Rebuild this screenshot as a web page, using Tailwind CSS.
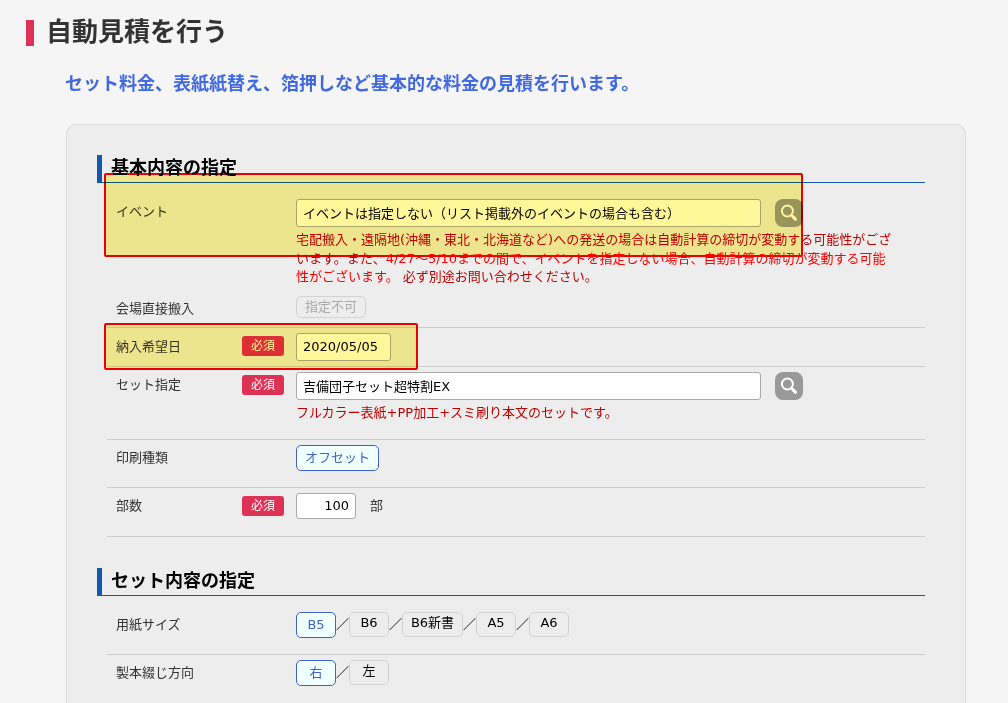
<!DOCTYPE html>
<html lang="ja">
<head>
<meta charset="utf-8">
<meta name="viewport" content="width=device-width, initial-scale=1">
<title>自動見積を行う</title>
<script src="https://cdn.jsdelivr.net/npm/@tailwindcss/browser@4"></script>
</head>
<body class="bg-[#f5f5f5] font-['DejaVu_Sans','Noto_Sans_CJK_JP',sans-serif] text-[13px] leading-[26px] text-[#333]">
<main class="pt-5 pr-[42px] pl-[26px]">
  <h1 class="flex h-[26px] items-center border-l-8 border-[#de3156] pb-0.5 pl-3 text-[26px] font-bold">自動見積を行う</h1>
  <p class="mt-[25px] pl-[39px] text-[18px] font-bold text-[#4169e1]">セット料金、表紙紙替え、箔押しなど基本的な料金の見積を行います。</p>

  <form class="relative mt-[27px] ml-10 rounded-[10px] border border-[#dcdcdc] bg-[#ededed] pt-[30px] pr-10 pb-10 pl-[30px]">
    <section>
      <h2 class="flex h-7 items-center border-b border-l-5 border-[#0f5ab0] pb-0.5 pl-[9px] text-[18px] font-bold text-black">基本内容の指定</h2>

      <div class="ml-[10px] grid grid-cols-[125px_54px_1fr] pt-4 pb-[5px] pl-[9px]">
        <label for="event">イベント</label>
        <span></span>
        <div class="pl-px">
          <div class="flex gap-[14px]">
            <input id="event" type="text" readonly value="イベントは指定しない（リスト掲載外のイベントの場合も含む）" class="h-7 w-[465px] rounded-[3px] border border-[#aaa] bg-white px-1.5 pb-0.5 text-black">
            <button type="button" aria-label="イベントを検索" class="flex size-7 items-center justify-center rounded-[8px] bg-[#999]">
              <svg viewBox="0 0 28 28" class="size-7" fill="none" stroke="#fff" stroke-linecap="round"><circle cx="12.4" cy="12" r="5.5" stroke-width="2"/><path d="M16.4 16l1.8 1.8" stroke-width="2"/><path d="M18 17.8l2.4 2.4" stroke-width="3.2"/></svg>
            </button>
          </div>
          <p class="mt-1 max-w-[602px] leading-[18px] text-[#c00000]">宅配搬入・遠隔地(沖縄・東北・北海道など)への発送の場合は自動計算の締切が変動する可能性がござ<br>います。また、<span class="text-[#ff0000]">4/27<span class="font-['Noto_Sans_CJK_JP']">～</span>5/10までの間で、イベントを指定しない場合、自動計算の締切が変動する可能<br>性がございます。</span> 必ず別途お問い合わせください。</p>
        </div>
      </div>

      <div class="ml-[10px] grid grid-cols-[125px_54px_1fr] border-b border-[#ccc] py-[5px] pl-[9px]">
        <span>会場直接搬入</span>
        <span></span>
        <div class="flex items-start pl-px">
          <button type="button" disabled class="h-[22px] w-[70px] rounded-[5px] border border-[#d3d3d3] text-[#aaa] leading-5">指定不可</button>
        </div>
      </div>

      <div class="ml-[10px] grid grid-cols-[125px_54px_1fr] border-b border-[#ccc] py-[5px] pl-[9px]">
        <label for="date" class="leading-7">納入希望日</label>
        <span class="mt-[3px] ml-px flex h-5 w-[42px] items-center justify-center rounded-[3px] bg-[#de3156] pb-px text-[12px] text-white">必須</span>
        <div class="flex pl-px">
          <input id="date" type="text" value="2020/05/05" class="h-7 w-[95px] rounded-[3px] border border-[#aaa] bg-white px-1.5 pb-0.5 text-black">
        </div>
      </div>

      <div class="ml-[10px] grid grid-cols-[125px_54px_1fr] border-b border-[#ccc] pt-[5px] pb-[17px] pl-[9px]">
        <label for="set">セット指定</label>
        <span class="mt-[3px] ml-px flex h-5 w-[42px] items-center justify-center rounded-[3px] bg-[#de3156] pb-px text-[12px] text-white">必須</span>
        <div class="pl-px">
          <div class="flex gap-[14px]">
            <input id="set" type="text" readonly value="吉備団子セット超特割EX" class="h-7 w-[465px] rounded-[3px] border border-[#aaa] bg-white px-1.5 pb-0.5 text-black">
            <button type="button" aria-label="セットを検索" class="flex size-7 items-center justify-center rounded-[8px] bg-[#999]">
              <svg viewBox="0 0 28 28" class="size-7" fill="none" stroke="#fff" stroke-linecap="round"><circle cx="12.4" cy="12" r="5.5" stroke-width="2"/><path d="M16.4 16l1.8 1.8" stroke-width="2"/><path d="M18 17.8l2.4 2.4" stroke-width="3.2"/></svg>
            </button>
          </div>
          <p class="mt-1 leading-[18px] text-[#c00000]">フルカラー表紙+PP加工+スミ刷り本文のセットです。</p>
        </div>
      </div>

      <div class="ml-[10px] grid grid-cols-[125px_54px_1fr] border-b border-[#ccc] pt-[5px] pb-4 pl-[9px]">
        <span>印刷種類</span>
        <span></span>
        <div class="flex pl-px">
          <button type="button" class="h-[26px] w-[83px] rounded-[5px] border border-[#4062cc] bg-[#f0ffff] text-[#4062cc] leading-6">オフセット</button>
        </div>
      </div>

      <div class="ml-[10px] grid grid-cols-[125px_54px_1fr] border-b border-[#ccc] pt-[5px] pb-[17px] pl-[9px]">
        <label for="copies">部数</label>
        <span class="mt-[3px] ml-px flex h-5 w-[42px] items-center justify-center rounded-[3px] bg-[#de3156] pb-px text-[12px] text-white">必須</span>
        <div class="flex gap-[14px] pl-px">
          <input id="copies" type="text" value="100" class="h-[26px] w-[60px] rounded-[3px] border border-[#aaa] bg-white px-1.5 text-right text-black">
          <span>部</span>
        </div>
      </div>
    </section>

    <section class="mt-[31px]">
      <h2 class="flex h-7 items-center border-b border-l-5 border-[#0f5ab0] pb-0.5 pl-[9px] text-[18px] font-bold text-black">セット内容の指定</h2>

      <div class="ml-[10px] grid grid-cols-[125px_54px_1fr] border-b border-[#ccc] py-4 pl-[9px]">
        <span>用紙サイズ</span>
        <span></span>
        <div class="flex items-start pl-px text-black">
          <button type="button" class="h-[26px] w-10 rounded-[5px] border border-[#4062cc] bg-[#f0ffff] text-[#4062cc] leading-6">B5</button>
          <span>／</span>
          <button type="button" class="h-[25px] w-10 rounded-[5px] border border-[#d3d3d3] pb-1 leading-5">B6</button>
          <span>／</span>
          <button type="button" class="h-[25px] w-[61px] rounded-[5px] border border-[#d3d3d3] pb-1 leading-5">B6新書</button>
          <span>／</span>
          <button type="button" class="h-[25px] w-10 rounded-[5px] border border-[#d3d3d3] pb-1 leading-5">A5</button>
          <span>／</span>
          <button type="button" class="h-[25px] w-10 rounded-[5px] border border-[#d3d3d3] pb-1 leading-5">A6</button>
        </div>
      </div>

      <div class="ml-[10px] grid grid-cols-[125px_54px_1fr] pt-[5px] pb-4 pl-[9px]">
        <span>製本綴じ方向</span>
        <span></span>
        <div class="flex items-start pl-px text-black">
          <button type="button" class="h-[26px] w-10 rounded-[5px] border border-[#4062cc] bg-[#f0ffff] text-[#4062cc] leading-6">右</button>
          <span>／</span>
          <button type="button" class="h-[25px] w-10 rounded-[5px] border border-[#d3d3d3] pb-1 leading-5">左</button>
        </div>
      </div>
    </section>

    <!-- highlighter boxes over the event and delivery-date rows -->
    <div class="pointer-events-none absolute top-12 left-[37px] h-[84px] w-[699px] rounded-[2px] border-2 border-[#ff0000] bg-[#fff799] mix-blend-multiply"></div>
    <div class="pointer-events-none absolute top-[198px] left-[37px] h-[47px] w-[314px] rounded-[2px] border-2 border-[#ff0000] bg-[#fff799] mix-blend-multiply"></div>
  </form>
</main>
</body>
</html>
